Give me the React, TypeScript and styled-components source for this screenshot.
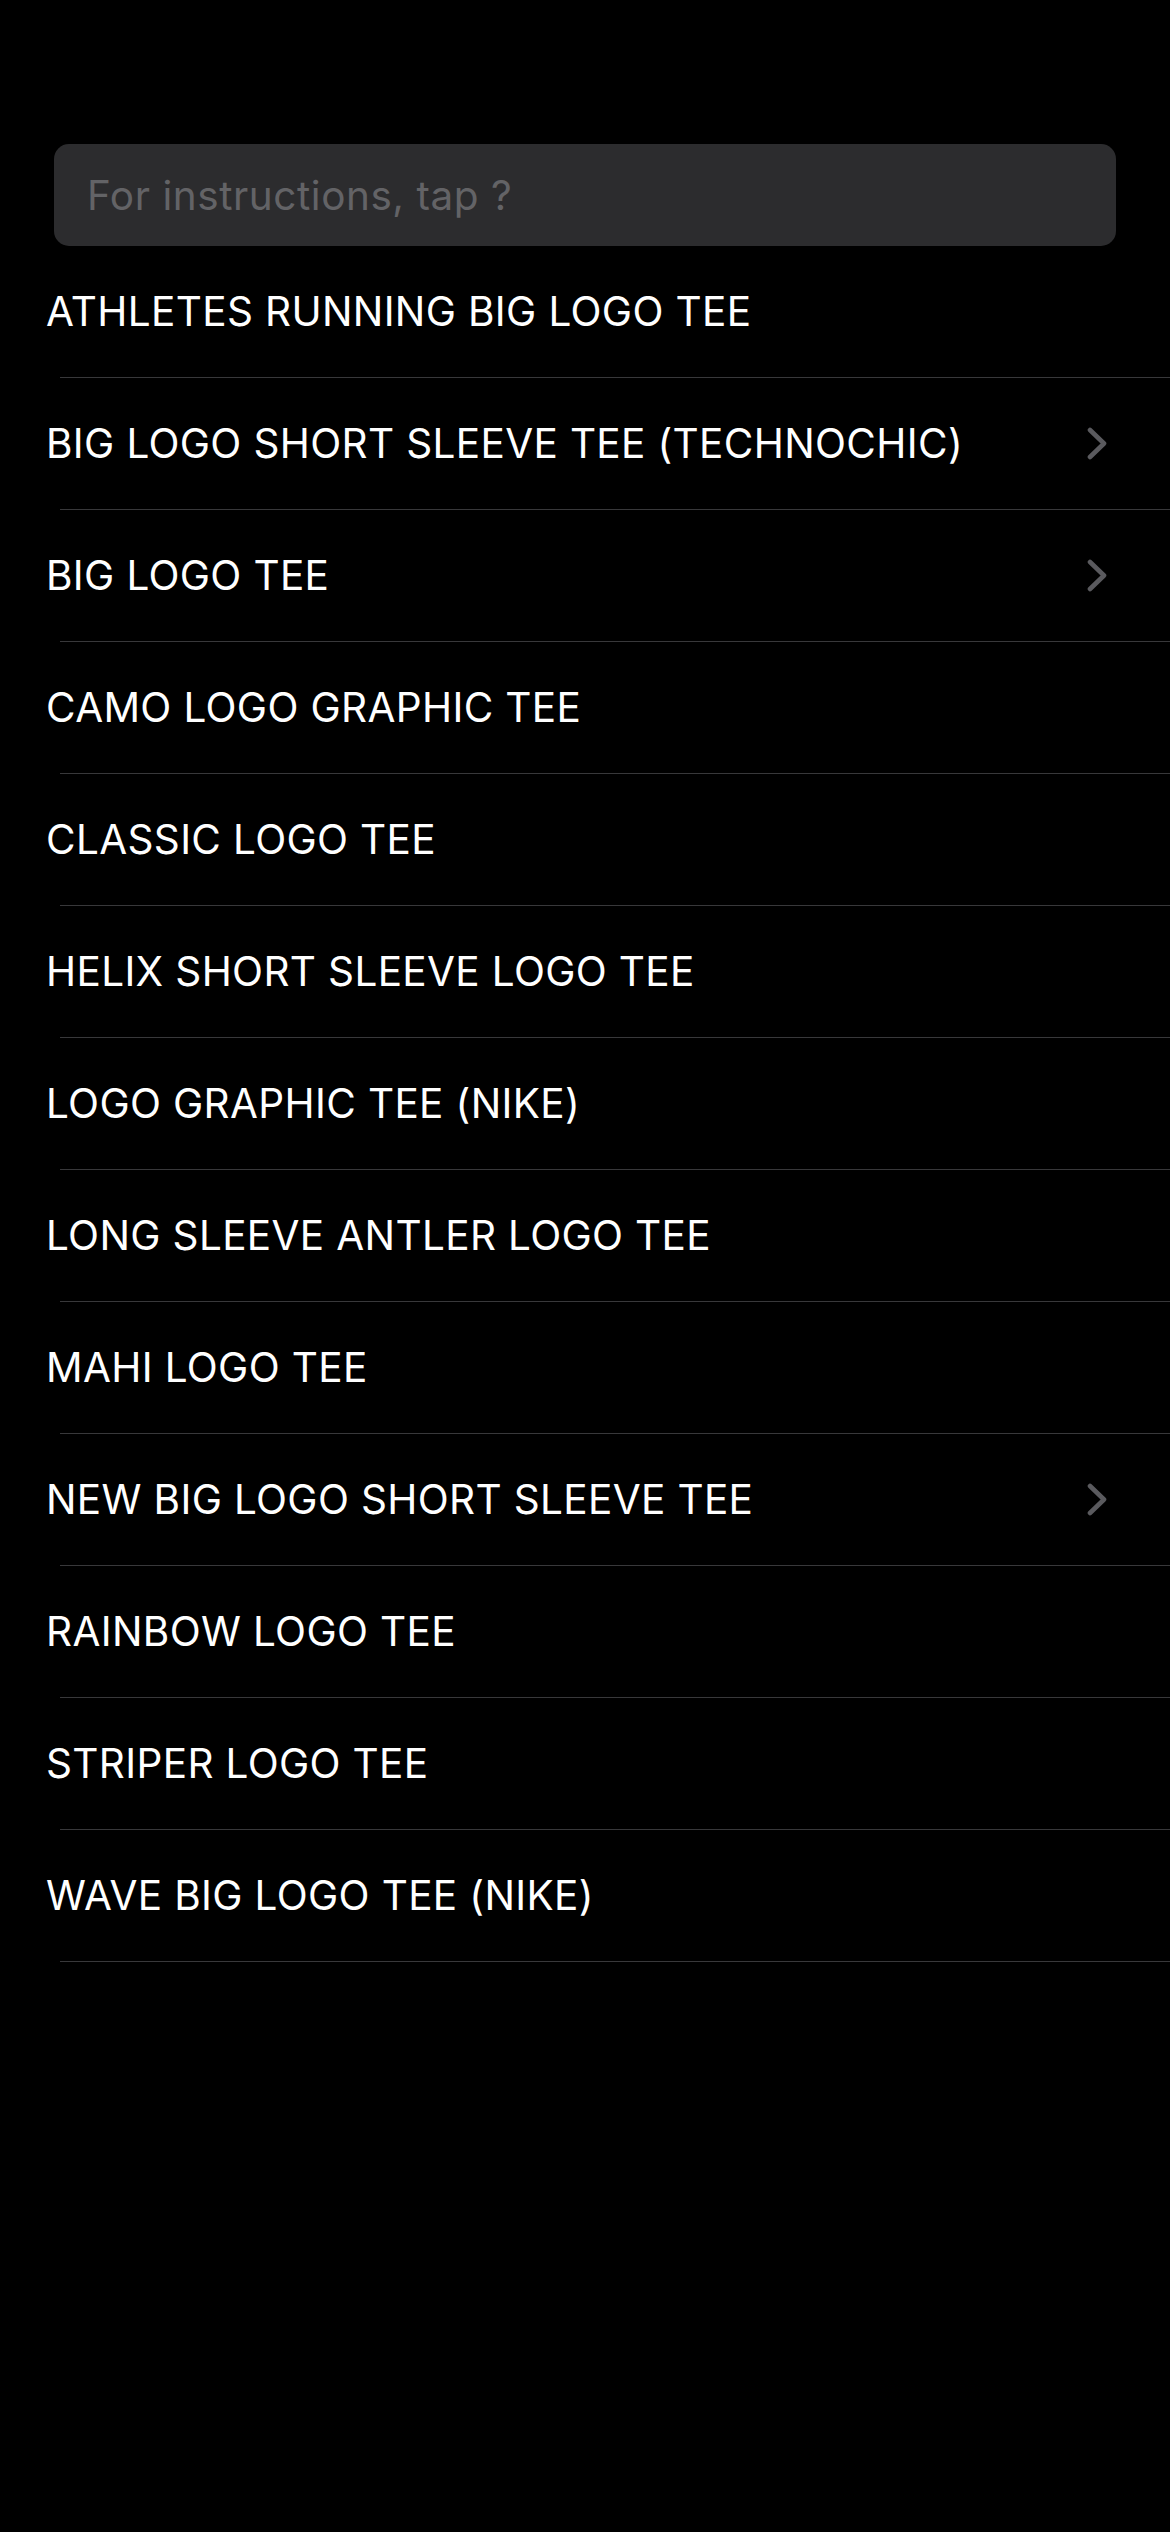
import React from "react";
import styled, { createGlobalStyle } from "styled-components";

const GlobalStyle = createGlobalStyle`
  html, body {
    margin: 0;
    padding: 0;
    background: #000;
  }
  body {
    font-family: Inter, "Open Sans", Roboto, sans-serif;
    -webkit-font-smoothing: antialiased;
  }
`;

const Page = styled.div`
  width: 1170px;
  min-height: 2532px;
  background: #000;
  padding-top: 144px;
  box-sizing: border-box;
  display: flex;
  flex-direction: column;
`;

const SearchField = styled.div`
  margin: 0 54px 0 54px;
  height: 102px;
  border-radius: 15px;
  background: #2c2c2e;
  display: flex;
  align-items: center;
  padding-left: 33px;
  box-sizing: border-box;
`;

const Placeholder = styled.span`
  font-size: 40.5px;
  color: #636366;
  letter-spacing: 0.55px;
`;

const List = styled.ul`
  list-style: none;
  margin: 0;
  padding: 0;
  display: flex;
  flex-direction: column;
`;

const Item = styled.li`
  display: flex;
  flex-direction: column;
`;

const Content = styled.div`
  height: 131px;
  display: flex;
  align-items: center;
  justify-content: space-between;
  padding: 0 63px 0 46px;
  box-sizing: border-box;
`;

const Label = styled.span`
  font-size: 40.5px;
  color: #fff;
  letter-spacing: 0.35px;
  white-space: nowrap;
`;

const Divider = styled.div`
  height: 1px;
  margin-left: 60px;
  background: #38383a;
`;

const Chevron = () => (
  <svg width="20" height="33" viewBox="0 0 20 33" fill="none">
    <path
      d="M3 3 L17 16.5 L3 30"
      stroke="#5a5a5e"
      strokeWidth="4.6"
      strokeLinecap="round"
      strokeLinejoin="round"
    />
  </svg>
);

const items: { name: string; more?: boolean }[] = [
  { name: "ATHLETES RUNNING BIG LOGO TEE" },
  { name: "BIG LOGO SHORT SLEEVE TEE (TECHNOCHIC)", more: true },
  { name: "BIG LOGO TEE", more: true },
  { name: "CAMO LOGO GRAPHIC TEE" },
  { name: "CLASSIC LOGO TEE" },
  { name: "HELIX SHORT SLEEVE LOGO TEE" },
  { name: "LOGO GRAPHIC TEE (NIKE)" },
  { name: "LONG SLEEVE ANTLER LOGO TEE" },
  { name: "MAHI LOGO TEE" },
  { name: "NEW BIG LOGO SHORT SLEEVE TEE", more: true },
  { name: "RAINBOW LOGO TEE" },
  { name: "STRIPER LOGO TEE" },
  { name: "WAVE BIG LOGO TEE (NIKE)" },
];

export default function App() {
  return (
    <>
      <GlobalStyle />
      <Page>
        <SearchField>
          <Placeholder>For instructions, tap ?</Placeholder>
        </SearchField>
        <List>
          {items.map((it) => (
            <Item key={it.name}>
              <Content>
                <Label>{it.name}</Label>
                {it.more && <Chevron />}
              </Content>
              <Divider />
            </Item>
          ))}
        </List>
      </Page>
    </>
  );
}
